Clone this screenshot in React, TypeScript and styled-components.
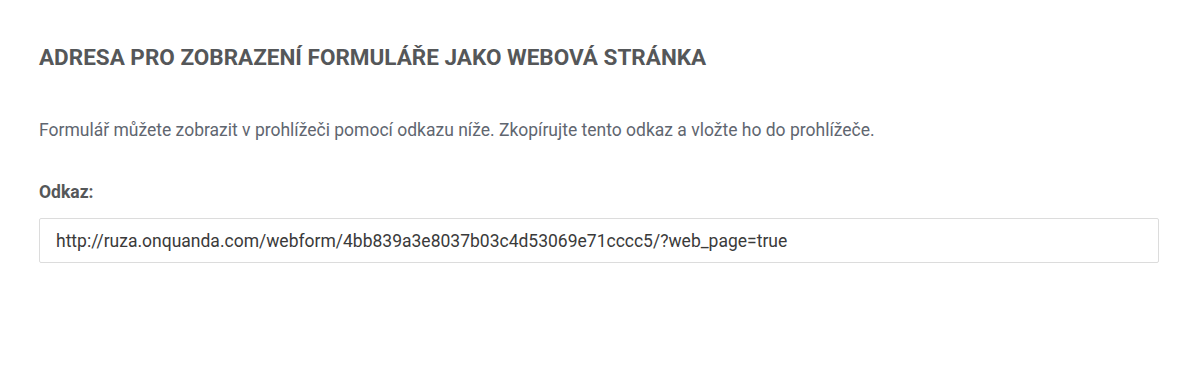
import styled, { createGlobalStyle } from "styled-components";

const Global = createGlobalStyle`
  body {
    margin: 0;
    background: #fff;
    font-family: Roboto, "Liberation Sans", sans-serif;
  }
`;

export default function App() {
  return (
    <>
      <Global />
      <Section>
        <Title>Adresa pro zobrazení formuláře jako webová stránka</Title>
        <Text>
          Formulář můžete zobrazit v prohlížeči pomocí odkazu níže. Zkopírujte
          tento odkaz a vložte ho do prohlížeče.
        </Text>
        <Label htmlFor="link">Odkaz:</Label>
        <Input
          id="link"
          readOnly
          value="http://ruza.onquanda.com/webform/4bb839a3e8037b03c4d53069e71cccc5/?web_page=true"
        />
      </Section>
    </>
  );
}

const Section = styled.div`
  display: flex;
  flex-direction: column;
  padding: 43px 37px 0 39px;
`;

const Title = styled.h2`
  margin: 0;
  font-size: 22.5px;
  line-height: 28px;
  font-weight: 700;
  text-transform: uppercase;
  color: #555759;
`;

const Text = styled.p`
  margin: 47px 0 0;
  font-size: 17.5px;
  line-height: 24px;
  color: #5f6670;
`;

const Label = styled.label`
  margin-top: 38px;
  font-size: 17.5px;
  line-height: 24px;
  font-weight: 700;
  color: #555759;
`;

const Input = styled.input`
  margin-top: 14px;
  box-sizing: border-box;
  height: 45px;
  width: 100%;
  padding: 0 16px;
  border: 1px solid #dcdcdc;
  border-radius: 2px;
  font-family: Roboto, "Liberation Sans", sans-serif;
  font-size: 17.5px;
  color: #3a3a3a;
  outline: none;
`;
